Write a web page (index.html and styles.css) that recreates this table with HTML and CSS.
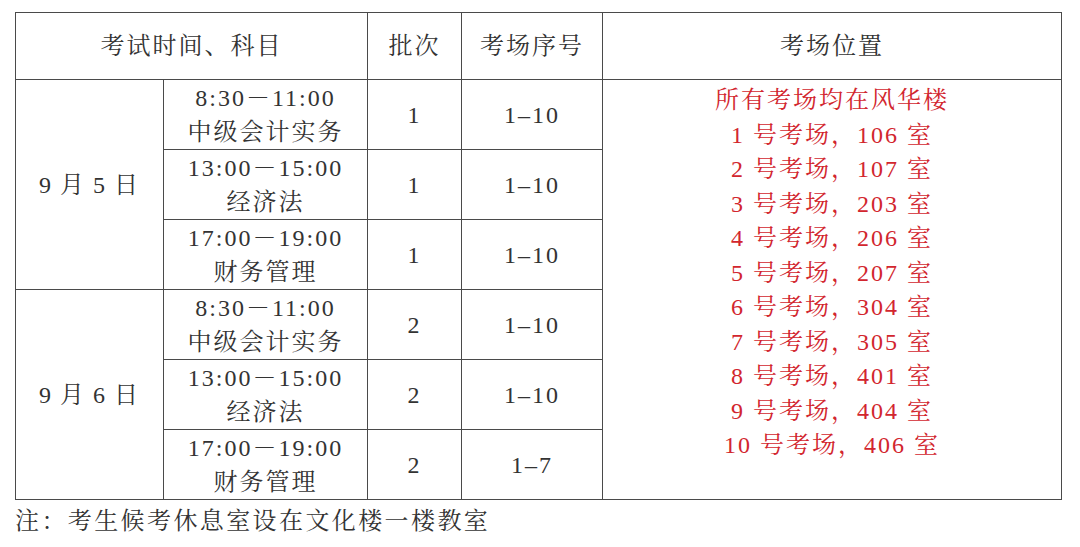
FILE: index.html
```html
<!DOCTYPE html>
<html lang="zh-CN">
<head>
<meta charset="utf-8">
<title>考试安排</title>
<link rel="stylesheet" href="styles.css">
</head>
<body>
<div class="page">
  <table class="exam">
    <colgroup>
      <col class="c-date">
      <col class="c-time">
      <col class="c-batch">
      <col class="c-room">
      <col class="c-loc">
    </colgroup>
    <thead>
      <tr class="head">
        <th colspan="2">考试时间、科目</th>
        <th>批次</th>
        <th>考场序号</th>
        <th>考场位置</th>
      </tr>
    </thead>
    <tbody>
      <tr>
        <td rowspan="3" class="date">9 月 5 日</td>
        <td>8:30－11:00<br>中级会计实务</td>
        <td>1</td>
        <td>1–10</td>
        <td rowspan="6" class="loc">所有考场均在风华楼<br>1 号考场，106 室<br>2 号考场，107 室<br>3 号考场，203 室<br>4 号考场，206 室<br>5 号考场，207 室<br>6 号考场，304 室<br>7 号考场，305 室<br>8 号考场，401 室<br>9 号考场，404 室<br>10 号考场，406 室</td>
      </tr>
      <tr>
        <td>13:00－15:00<br>经济法</td>
        <td>1</td>
        <td>1–10</td>
      </tr>
      <tr>
        <td>17:00－19:00<br>财务管理</td>
        <td>1</td>
        <td>1–10</td>
      </tr>
      <tr>
        <td rowspan="3" class="date">9 月 6 日</td>
        <td>8:30－11:00<br>中级会计实务</td>
        <td>2</td>
        <td>1–10</td>
      </tr>
      <tr>
        <td>13:00－15:00<br>经济法</td>
        <td>2</td>
        <td>1–10</td>
      </tr>
      <tr>
        <td>17:00－19:00<br>财务管理</td>
        <td>2</td>
        <td>1–7</td>
      </tr>
    </tbody>
  </table>
  <p class="note">注：考生候考休息室设在文化楼一楼教室</p>
</div>
</body>
</html>
```

FILE: styles.css
```css
html, body {
  margin: 0;
  padding: 0;
  background: #ffffff;
}

body {
  font-family: "Liberation Serif", "Noto Serif CJK SC", "Noto Sans CJK SC", serif;
  color: #333333;
  font-size: 24px;
  letter-spacing: 2px;
}

.page {
  padding: 12px 0 0 15px;
}

.exam {
  border-collapse: collapse;
  table-layout: fixed;
  width: 1046px;
}

.c-date { width: 148px; }
.c-time { width: 204px; }
.c-batch { width: 94px; }
.c-room { width: 141px; }
.c-loc { width: 459px; }

.exam th,
.exam td {
  border: 1px solid #4a4a4a;
  padding: 0;
  text-align: center;
  vertical-align: middle;
  line-height: 34px;
  font-weight: normal;
}

.exam tr.head th {
  height: 66px;
}

.exam tbody tr {
  height: 70px;
}

.exam td.date {
  word-spacing: -1px;
}

.exam td.loc {
  vertical-align: top;
  color: #d2262e;
  line-height: 34.5px;
  padding-top: 3px;
}

.note {
  margin: 4px 0 0 0;
  line-height: 34px;
  letter-spacing: 2.4px;
}
```
